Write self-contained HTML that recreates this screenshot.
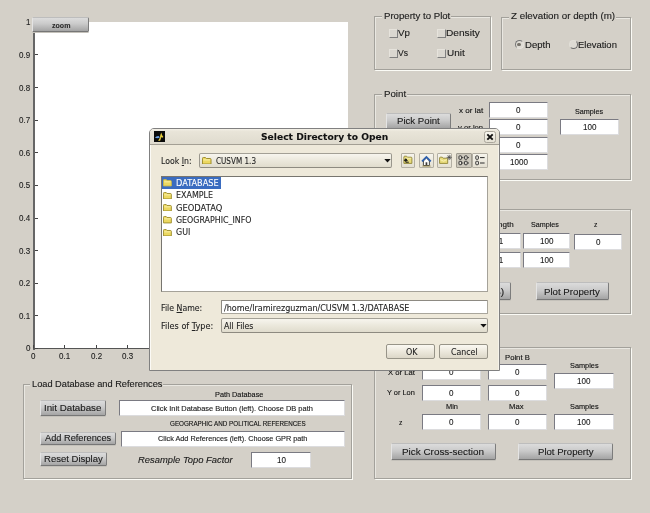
<!DOCTYPE html>
<html lang="en"><head><meta charset="utf-8"><title>CUSVM GUI - Select Directory to Open</title>
<style>
html,body{margin:0;padding:0;}
body{width:650px;height:513px;overflow:hidden;background:#d4d0c8;position:relative;font-family:"Liberation Sans", sans-serif;}
#root{position:absolute;left:0;top:0;width:650px;height:513px;will-change:transform;}
.abs{position:absolute;}
.t{position:absolute;white-space:nowrap;transform-origin:0 0;}
.ls{font-family:"Liberation Sans", sans-serif;-webkit-text-stroke:0.12px currentColor;}
.dv{font-family:"DejaVu Sans", "Liberation Sans", sans-serif;-webkit-text-stroke:0.1px currentColor;}
.fld{background:#fff;border:1px solid;border-color:#7a7a82 #dcdcde #dcdcde #7a7a82;box-sizing:border-box;}
.fld2{background:#fff;border:1px solid;border-color:#8d8a82 #a9a69c #a9a69c #8d8a82;box-sizing:border-box;border-radius:1px;}
.btn{box-sizing:border-box;background:linear-gradient(#dcdcdc,#cacaca 45%,#a4a4a4);border:1px solid;border-color:#bdbdbd #7c7c7c #767676 #e4e4e4;border-radius:1.5px;box-shadow:0 1px 0 #c4c1ba;}
.chk{box-sizing:border-box;background:#dad7d0;border:1px solid;border-color:#e6e3dc #7f7f7f #7f7f7f #e6e3dc;}
.radio{box-sizing:border-box;border-radius:50%;border:1px solid;background:#dedbd4;}
.radio.on{border-color:#777 #e8e5de #e8e5de #777;transform:rotate(0deg);}
.radio.off{border-color:#e2dfd8 #6a6a6a #6a6a6a #e2dfd8;}
.radio .dot{position:absolute;left:1.6px;top:1.6px;width:3.8px;height:3.8px;border-radius:50%;background:#77736b;}
.dlg{box-sizing:border-box;background:#eee9da;border:1px solid #808080;border-radius:5px 5px 0 0;box-shadow:inset 1px 0 0 #fbfaf5,inset -1px 0 0 #f6f3ea;}
.dlgtitle{background:linear-gradient(#f4f1e8 0,#e9e5d9 14%,#dfdbce);border-radius:4px 4px 0 0;}
.closeb{box-sizing:border-box;border:1px solid #aaa69b;border-radius:2.5px;background:linear-gradient(#f7f5ee,#e6e2d5);}
.combo{box-sizing:border-box;border:1px solid;border-color:#a3a096 #9a978d #8d8a80 #9a978d;border-radius:2px;background:linear-gradient(#f7f5ee,#ebe8dc 50%,#e0dccd);}
.tbtn{box-sizing:border-box;border:1px solid #b3afa3;border-radius:1px;background:linear-gradient(#f6f4ec,#e4e0d2);}
.tbtn.pressed{background:#cdc9bd;border-color:#a09c90;}
.flist{box-sizing:border-box;background:#fff;border:1px solid;border-color:#77756f #a5a299 #a5a299 #77756f;}
.dbtn{box-sizing:border-box;border:1px solid #979488;border-radius:2px;background:linear-gradient(#faf8f2,#ece8dc 50%,#dcd7c8);}
</style></head>
<body>
<div id="root">
<div class="abs" style="left:34px;top:22px;width:313.5px;height:327px;background:#fff;"></div>
<div class="abs" style="left:33px;top:22px;width:2px;height:327.5px;background:#666;"></div>
<div class="abs" style="left:33px;top:347.6px;width:314.5px;height:1.6px;background:#555;"></div>
<div class="abs" style="left:35px;top:22px;width:2.5px;height:1px;background:#444;"></div>
<span class="t ls" id="t0" style="font-size:9px;line-height:9px;color:#222;left:25.96px;top:18.49px;transform:scaleX(0.8850);">1</span>
<div class="abs" style="left:35px;top:54px;width:2.5px;height:1px;background:#444;"></div>
<span class="t ls" id="t1" style="font-size:9px;line-height:9px;color:#222;left:19.32px;top:51.09px;transform:scaleX(0.8850);">0.9</span>
<div class="abs" style="left:35px;top:87px;width:2.5px;height:1px;background:#444;"></div>
<span class="t ls" id="t2" style="font-size:9px;line-height:9px;color:#222;left:19.32px;top:83.69px;transform:scaleX(0.8850);">0.8</span>
<div class="abs" style="left:35px;top:120px;width:2.5px;height:1px;background:#444;"></div>
<span class="t ls" id="t3" style="font-size:9px;line-height:9px;color:#222;left:19.32px;top:116.29px;transform:scaleX(0.8850);">0.7</span>
<div class="abs" style="left:35px;top:152px;width:2.5px;height:1px;background:#444;"></div>
<span class="t ls" id="t4" style="font-size:9px;line-height:9px;color:#222;left:19.32px;top:148.89px;transform:scaleX(0.8850);">0.6</span>
<div class="abs" style="left:35px;top:185px;width:2.5px;height:1px;background:#444;"></div>
<span class="t ls" id="t5" style="font-size:9px;line-height:9px;color:#222;left:19.32px;top:181.49px;transform:scaleX(0.8850);">0.5</span>
<div class="abs" style="left:35px;top:218px;width:2.5px;height:1px;background:#444;"></div>
<span class="t ls" id="t6" style="font-size:9px;line-height:9px;color:#222;left:19.32px;top:214.09px;transform:scaleX(0.8850);">0.4</span>
<div class="abs" style="left:35px;top:250px;width:2.5px;height:1px;background:#444;"></div>
<span class="t ls" id="t7" style="font-size:9px;line-height:9px;color:#222;left:19.32px;top:246.69px;transform:scaleX(0.8850);">0.3</span>
<div class="abs" style="left:35px;top:283px;width:2.5px;height:1px;background:#444;"></div>
<span class="t ls" id="t8" style="font-size:9px;line-height:9px;color:#222;left:19.32px;top:279.29px;transform:scaleX(0.8850);">0.2</span>
<div class="abs" style="left:35px;top:315px;width:2.5px;height:1px;background:#444;"></div>
<span class="t ls" id="t9" style="font-size:9px;line-height:9px;color:#222;left:19.32px;top:311.89px;transform:scaleX(0.8850);">0.1</span>
<div class="abs" style="left:35px;top:348px;width:2.5px;height:1px;background:#444;"></div>
<span class="t ls" id="t10" style="font-size:9px;line-height:9px;color:#222;left:25.96px;top:344.49px;transform:scaleX(0.8850);">0</span>
<div class="abs" style="left:33px;top:345px;width:1px;height:3px;background:#444;"></div>
<span class="t ls" id="t11" style="font-size:9px;line-height:9px;color:#222;left:31.28px;top:352.49px;transform:scaleX(0.8850);">0</span>
<div class="abs" style="left:64px;top:345px;width:1px;height:3px;background:#444;"></div>
<span class="t ls" id="t12" style="font-size:9px;line-height:9px;color:#222;left:59.23px;top:352.49px;transform:scaleX(0.8850);">0.1</span>
<div class="abs" style="left:96px;top:345px;width:1px;height:3px;background:#444;"></div>
<span class="t ls" id="t13" style="font-size:9px;line-height:9px;color:#222;left:90.50px;top:352.49px;transform:scaleX(0.8850);">0.2</span>
<div class="abs" style="left:127px;top:345px;width:1px;height:3px;background:#444;"></div>
<span class="t ls" id="t14" style="font-size:9px;line-height:9px;color:#222;left:121.77px;top:352.49px;transform:scaleX(0.8850);">0.3</span>
<div class="abs" style="left:158px;top:345px;width:1px;height:3px;background:#444;"></div>
<span class="t ls" id="t15" style="font-size:9px;line-height:9px;color:#222;left:153.04px;top:352.49px;transform:scaleX(0.8850);">0.4</span>
<div class="abs" style="left:189px;top:345px;width:1px;height:3px;background:#444;"></div>
<span class="t ls" id="t16" style="font-size:9px;line-height:9px;color:#222;left:184.31px;top:352.49px;transform:scaleX(0.8850);">0.5</span>
<div class="abs" style="left:221px;top:345px;width:1px;height:3px;background:#444;"></div>
<span class="t ls" id="t17" style="font-size:9px;line-height:9px;color:#222;left:215.58px;top:352.49px;transform:scaleX(0.8850);">0.6</span>
<div class="abs" style="left:252px;top:345px;width:1px;height:3px;background:#444;"></div>
<span class="t ls" id="t18" style="font-size:9px;line-height:9px;color:#222;left:246.85px;top:352.49px;transform:scaleX(0.8850);">0.7</span>
<div class="abs" style="left:283px;top:345px;width:1px;height:3px;background:#444;"></div>
<span class="t ls" id="t19" style="font-size:9px;line-height:9px;color:#222;left:278.12px;top:352.49px;transform:scaleX(0.8850);">0.8</span>
<div class="abs" style="left:314px;top:345px;width:1px;height:3px;background:#444;"></div>
<span class="t ls" id="t20" style="font-size:9px;line-height:9px;color:#222;left:309.39px;top:352.49px;transform:scaleX(0.8850);">0.9</span>
<div class="abs" style="left:346px;top:345px;width:1px;height:3px;background:#444;"></div>
<span class="t ls" id="t21" style="font-size:9px;line-height:9px;color:#222;left:343.98px;top:352.49px;transform:scaleX(0.8850);">1</span>
<div class="abs btn" style="left:32px;top:17px;width:57px;height:15px;"></div>
<span class="t ls" id="t22" style="font-size:7.5px;line-height:7.5px;color:#2a2a2a;font-weight:bold;left:51.50px;top:21.96px;transform:scaleX(0.9391);">zoom</span>
<div class="abs" style="left:375px;top:17px;width:117px;height:54px;border:1px solid;border-color:#e9e7e1 #fbfbf6 #fbfbf6 #e9e7e1;box-sizing:border-box;"></div>
<div class="abs" style="left:374px;top:16px;width:117px;height:54px;border:1px solid #a3a19b;box-sizing:border-box;"></div>
<div class="abs" style="left:382.2px;top:14px;width:69.0px;height:5px;background:#d4d0c8;"></div>
<span class="t ls" id="t23" style="font-size:9.4px;line-height:9.4px;color:#1a1a1a;left:383.80px;top:11.25px;transform:scaleX(1.0259);">Property to Plot</span>
<div class="abs chk" style="left:388.5px;top:29px;width:9px;height:9px;"></div>
<div class="abs chk" style="left:437.2px;top:29px;width:9px;height:9px;"></div>
<div class="abs chk" style="left:388.5px;top:49px;width:9px;height:9px;"></div>
<div class="abs chk" style="left:437.2px;top:49px;width:9px;height:9px;"></div>
<span class="t ls" id="t24" style="font-size:9.4px;line-height:9.4px;color:#1a1a1a;left:398.40px;top:28.25px;transform:scaleX(1.0376);">Vp</span>
<span class="t ls" id="t25" style="font-size:9.4px;line-height:9.4px;color:#1a1a1a;left:446.40px;top:28.25px;transform:scaleX(1.0811);">Density</span>
<span class="t ls" id="t26" style="font-size:9.4px;line-height:9.4px;color:#1a1a1a;left:398.40px;top:47.95px;transform:scaleX(0.9130);">Vs</span>
<span class="t ls" id="t27" style="font-size:9.4px;line-height:9.4px;color:#1a1a1a;left:446.80px;top:47.95px;transform:scaleX(1.0617);">Unit</span>
<div class="abs" style="left:502px;top:18px;width:130px;height:53px;border:1px solid;border-color:#e9e7e1 #fbfbf6 #fbfbf6 #e9e7e1;box-sizing:border-box;"></div>
<div class="abs" style="left:501px;top:17px;width:130px;height:53px;border:1px solid #a3a19b;box-sizing:border-box;"></div>
<div class="abs" style="left:509px;top:15px;width:106.79999999999995px;height:5px;background:#d4d0c8;"></div>
<span class="t ls" id="t28" style="font-size:9.4px;line-height:9.4px;color:#1a1a1a;left:510.60px;top:11.45px;transform:scaleX(1.0459);">Z elevation or depth (m)</span>
<div class="abs radio on" style="left:514.5px;top:40px;width:9px;height:9px;"><div class="dot"></div></div>
<span class="t ls" id="t29" style="font-size:9.4px;line-height:9.4px;color:#1a1a1a;left:525.30px;top:40.35px;transform:scaleX(1.0187);">Depth</span>
<div class="abs radio off" style="left:568.5px;top:40px;width:9px;height:9px;"></div>
<span class="t ls" id="t30" style="font-size:9.4px;line-height:9.4px;color:#1a1a1a;left:578.10px;top:40.05px;transform:scaleX(1.0083);">Elevation</span>
<div class="abs" style="left:375px;top:95px;width:257px;height:86px;border:1px solid;border-color:#e9e7e1 #fbfbf6 #fbfbf6 #e9e7e1;box-sizing:border-box;"></div>
<div class="abs" style="left:374px;top:94px;width:257px;height:86px;border:1px solid #a3a19b;box-sizing:border-box;"></div>
<div class="abs" style="left:382px;top:92px;width:24.80000000000001px;height:5px;background:#d4d0c8;"></div>
<span class="t ls" id="t31" style="font-size:9.4px;line-height:9.4px;color:#1a1a1a;left:383.60px;top:89.05px;transform:scaleX(1.0339);">Point</span>
<div class="abs btn" style="left:386px;top:112.5px;width:65px;height:16px;"></div>
<span class="t ls" id="t32" style="font-size:9.4px;line-height:9.4px;color:#1a1a1a;left:397.30px;top:115.75px;transform:scaleX(1.0267);">Pick Point</span>
<span class="t ls" id="t33" style="font-size:7.5px;line-height:7.5px;color:#111;left:458.80px;top:106.86px;transform:scaleX(1.0748);">x or lat</span>
<span class="t ls" id="t34" style="font-size:7.5px;line-height:7.5px;color:#111;left:458.30px;top:124.25px;transform:scaleX(1.0199);">y or lon</span>
<span class="t ls" id="t35" style="font-size:7.5px;line-height:7.5px;color:#111;left:468.31px;top:141.66px;transform:scaleX(0.9000);">z</span>
<div class="abs fld" style="left:489px;top:102px;width:59px;height:16px;"></div>
<span class="t ls" id="t36" style="font-size:9.4px;line-height:9.4px;color:#1a1a1a;left:516.26px;top:104.85px;transform:scaleX(0.8600);">0</span>
<div class="abs fld" style="left:489px;top:119px;width:59px;height:16px;"></div>
<span class="t ls" id="t37" style="font-size:9.4px;line-height:9.4px;color:#1a1a1a;left:516.26px;top:121.85px;transform:scaleX(0.8600);">0</span>
<div class="abs fld" style="left:489px;top:137px;width:59px;height:16px;"></div>
<span class="t ls" id="t38" style="font-size:9.4px;line-height:9.4px;color:#1a1a1a;left:516.26px;top:139.85px;transform:scaleX(0.8600);">0</span>
<div class="abs fld" style="left:489px;top:154px;width:59px;height:16px;"></div>
<span class="t ls" id="t39" style="font-size:9.4px;line-height:9.4px;color:#1a1a1a;left:509.53px;top:156.85px;transform:scaleX(0.8600);">1000</span>
<span class="t ls" id="t40" style="font-size:7.5px;line-height:7.5px;color:#111;left:575.30px;top:107.56px;transform:scaleX(0.9627);">Samples</span>
<div class="abs fld" style="left:560px;top:119px;width:59px;height:16px;"></div>
<span class="t ls" id="t41" style="font-size:9.4px;line-height:9.4px;color:#1a1a1a;left:582.77px;top:121.85px;transform:scaleX(0.8600);">100</span>
<div class="abs" style="left:375px;top:210px;width:257px;height:105px;border:1px solid;border-color:#e9e7e1 #fbfbf6 #fbfbf6 #e9e7e1;box-sizing:border-box;"></div>
<div class="abs" style="left:374px;top:209px;width:257px;height:105px;border:1px solid #a3a19b;box-sizing:border-box;"></div>
<span class="t ls" id="t42" style="font-size:7.5px;line-height:7.5px;color:#111;left:489.10px;top:220.85px;transform:scaleX(1.0761);">Length</span>
<span class="t ls" id="t43" style="font-size:7.5px;line-height:7.5px;color:#111;left:531.00px;top:220.85px;transform:scaleX(0.9559);">Samples</span>
<span class="t ls" id="t44" style="font-size:7.5px;line-height:7.5px;color:#111;left:594.11px;top:220.85px;transform:scaleX(0.9000);">z</span>
<div class="abs fld" style="left:474px;top:233px;width:47px;height:16px;"></div>
<span class="t ls" id="t45" style="font-size:9.4px;line-height:9.4px;color:#1a1a1a;left:491.89px;top:235.85px;transform:scaleX(0.8600);">0.1</span>
<div class="abs fld" style="left:523px;top:233px;width:47px;height:16px;"></div>
<span class="t ls" id="t46" style="font-size:9.4px;line-height:9.4px;color:#1a1a1a;left:539.77px;top:235.85px;transform:scaleX(0.8600);">100</span>
<div class="abs fld" style="left:574px;top:234px;width:48px;height:16px;"></div>
<span class="t ls" id="t47" style="font-size:9.4px;line-height:9.4px;color:#1a1a1a;left:595.76px;top:236.85px;transform:scaleX(0.8600);">0</span>
<div class="abs fld" style="left:474px;top:252px;width:47px;height:16px;"></div>
<span class="t ls" id="t48" style="font-size:9.4px;line-height:9.4px;color:#1a1a1a;left:491.89px;top:254.85px;transform:scaleX(0.8600);">0.1</span>
<div class="abs fld" style="left:523px;top:252px;width:47px;height:16px;"></div>
<span class="t ls" id="t49" style="font-size:9.4px;line-height:9.4px;color:#1a1a1a;left:539.77px;top:254.85px;transform:scaleX(0.8600);">100</span>
<div class="abs btn" style="left:404px;top:282.3px;width:107px;height:18.2px;"></div>
<span class="t ls" id="t50" style="font-size:9.4px;line-height:9.4px;color:#1a1a1a;left:435.60px;top:286.65px;transform:scaleX(1.0891);">Pick Line (A-B)</span>
<div class="abs btn" style="left:536px;top:282.3px;width:73px;height:18.2px;"></div>
<span class="t ls" id="t51" style="font-size:9.4px;line-height:9.4px;color:#1a1a1a;left:544.00px;top:286.65px;transform:scaleX(1.0313);">Plot Property</span>
<div class="abs" style="left:375px;top:348px;width:257px;height:132px;border:1px solid;border-color:#e9e7e1 #fbfbf6 #fbfbf6 #e9e7e1;box-sizing:border-box;"></div>
<div class="abs" style="left:374px;top:347px;width:257px;height:132px;border:1px solid #a3a19b;box-sizing:border-box;"></div>
<span class="t ls" id="t52" style="font-size:7.5px;line-height:7.5px;color:#111;left:438.60px;top:353.65px;transform:scaleX(1.0428);">Point A</span>
<span class="t ls" id="t53" style="font-size:7.5px;line-height:7.5px;color:#111;left:504.60px;top:353.65px;transform:scaleX(1.0253);">Point B</span>
<span class="t ls" id="t54" style="font-size:7.5px;line-height:7.5px;color:#111;left:387.60px;top:369.25px;transform:scaleX(1.0203);">X or Lat</span>
<span class="t ls" id="t55" style="font-size:7.5px;line-height:7.5px;color:#111;left:386.60px;top:388.75px;transform:scaleX(0.9852);">Y or Lon</span>
<span class="t ls" id="t56" style="font-size:7.5px;line-height:7.5px;color:#111;left:398.61px;top:418.85px;transform:scaleX(0.9000);">z</span>
<span class="t ls" id="t57" style="font-size:7.5px;line-height:7.5px;color:#111;left:446.40px;top:403.15px;transform:scaleX(0.9922);">Min</span>
<span class="t ls" id="t58" style="font-size:7.5px;line-height:7.5px;color:#111;left:508.90px;top:403.15px;transform:scaleX(1.0232);">Max</span>
<span class="t ls" id="t59" style="font-size:7.5px;line-height:7.5px;color:#111;left:570.30px;top:362.45px;transform:scaleX(0.9799);">Samples</span>
<span class="t ls" id="t60" style="font-size:7.5px;line-height:7.5px;color:#111;left:570.30px;top:403.35px;transform:scaleX(0.9799);">Samples</span>
<div class="abs fld" style="left:422px;top:364px;width:59px;height:16px;"></div>
<span class="t ls" id="t61" style="font-size:9.4px;line-height:9.4px;color:#1a1a1a;left:449.26px;top:366.85px;transform:scaleX(0.8600);">0</span>
<div class="abs fld" style="left:488px;top:364px;width:59px;height:16px;"></div>
<span class="t ls" id="t62" style="font-size:9.4px;line-height:9.4px;color:#1a1a1a;left:515.26px;top:366.85px;transform:scaleX(0.8600);">0</span>
<div class="abs fld" style="left:422px;top:385px;width:59px;height:16px;"></div>
<span class="t ls" id="t63" style="font-size:9.4px;line-height:9.4px;color:#1a1a1a;left:449.26px;top:387.85px;transform:scaleX(0.8600);">0</span>
<div class="abs fld" style="left:488px;top:385px;width:59px;height:16px;"></div>
<span class="t ls" id="t64" style="font-size:9.4px;line-height:9.4px;color:#1a1a1a;left:515.26px;top:387.85px;transform:scaleX(0.8600);">0</span>
<div class="abs fld" style="left:422px;top:414px;width:59px;height:16px;"></div>
<span class="t ls" id="t65" style="font-size:9.4px;line-height:9.4px;color:#1a1a1a;left:449.26px;top:416.85px;transform:scaleX(0.8600);">0</span>
<div class="abs fld" style="left:488px;top:414px;width:59px;height:16px;"></div>
<span class="t ls" id="t66" style="font-size:9.4px;line-height:9.4px;color:#1a1a1a;left:515.26px;top:416.85px;transform:scaleX(0.8600);">0</span>
<div class="abs fld" style="left:554px;top:373px;width:60px;height:16px;"></div>
<span class="t ls" id="t67" style="font-size:9.4px;line-height:9.4px;color:#1a1a1a;left:577.27px;top:375.85px;transform:scaleX(0.8600);">100</span>
<div class="abs fld" style="left:554px;top:414px;width:60px;height:16px;"></div>
<span class="t ls" id="t68" style="font-size:9.4px;line-height:9.4px;color:#1a1a1a;left:577.27px;top:416.85px;transform:scaleX(0.8600);">100</span>
<div class="abs btn" style="left:391px;top:443px;width:105px;height:17px;"></div>
<span class="t ls" id="t69" style="font-size:9.4px;line-height:9.4px;color:#1a1a1a;left:402.20px;top:446.55px;transform:scaleX(1.0564);">Pick Cross-section</span>
<div class="abs btn" style="left:518px;top:443px;width:95px;height:17px;"></div>
<span class="t ls" id="t70" style="font-size:9.4px;line-height:9.4px;color:#1a1a1a;left:538.10px;top:446.65px;transform:scaleX(1.0239);">Plot Property</span>
<div class="abs" style="left:24px;top:385px;width:329px;height:95px;border:1px solid;border-color:#e9e7e1 #fbfbf6 #fbfbf6 #e9e7e1;box-sizing:border-box;"></div>
<div class="abs" style="left:23px;top:384px;width:329px;height:95px;border:1px solid #a3a19b;box-sizing:border-box;"></div>
<div class="abs" style="left:30.200000000000003px;top:382px;width:133.10000000000002px;height:5px;background:#d4d0c8;"></div>
<span class="t ls" id="t71" style="font-size:9.4px;line-height:9.4px;color:#1a1a1a;left:31.80px;top:378.75px;transform:scaleX(0.9850);">Load Database and References</span>
<div class="abs btn" style="left:40px;top:400px;width:66px;height:16px;"></div>
<span class="t ls" id="t72" style="font-size:9.4px;line-height:9.4px;color:#1a1a1a;left:44.20px;top:402.95px;transform:scaleX(1.0389);">Init Database</span>
<div class="abs btn" style="left:40px;top:432px;width:76px;height:13px;"></div>
<span class="t ls" id="t73" style="font-size:9.4px;line-height:9.4px;color:#1a1a1a;left:44.90px;top:433.15px;transform:scaleX(0.9846);">Add References</span>
<div class="abs btn" style="left:40px;top:452px;width:67px;height:14px;"></div>
<span class="t ls" id="t74" style="font-size:9.4px;line-height:9.4px;color:#1a1a1a;left:44.20px;top:454.35px;transform:scaleX(1.0165);">Reset Display</span>
<span class="t ls" id="t75" style="font-size:7.5px;line-height:7.5px;color:#111;left:214.50px;top:390.55px;transform:scaleX(0.9753);">Path Database</span>
<div class="abs fld" style="left:119px;top:400px;width:226px;height:15.5px;"></div>
<span class="t ls" id="t76" style="font-size:7.5px;line-height:7.5px;color:#1a1a1a;left:150.90px;top:404.65px;transform:scaleX(0.9957);">Click Init Database Button (left). Choose DB path</span>
<span class="t ls" id="t77" style="font-size:7.5px;line-height:7.5px;color:#111;left:170.20px;top:419.95px;transform:scaleX(0.8385);">GEOGRAPHIC AND POLITICAL REFERENCES</span>
<div class="abs fld" style="left:121px;top:431px;width:224px;height:16px;"></div>
<span class="t ls" id="t78" style="font-size:7.5px;line-height:7.5px;color:#1a1a1a;left:157.80px;top:435.35px;transform:scaleX(0.9712);">Click Add References (left). Choose GPR path</span>
<span class="t ls" id="t79" style="font-size:9.4px;line-height:9.4px;color:#1a1a1a;font-style:italic;left:137.80px;top:455.25px;transform:scaleX(1.0021);">Resample Topo Factor</span>
<div class="abs fld" style="left:251px;top:452px;width:60px;height:15.5px;"></div>
<span class="t ls" id="t80" style="font-size:9.4px;line-height:9.4px;color:#1a1a1a;left:276.51px;top:454.60px;transform:scaleX(0.8600);">10</span>
<div class="abs dlg" style="left:149px;top:128px;width:351px;height:243px;"></div>
<div class="abs dlgtitle" style="left:150px;top:129px;width:349px;height:15px;"></div>
<div class="abs" style="left:150px;top:144px;width:349px;height:1px;background:#a39f94;"></div>
<svg class="abs" style="left:154px;top:131px" width="11" height="11" viewBox="0 0 11 11">
<rect width="11" height="11" fill="#0a0a0a"/>
<path d="M0.9 6.5 Q2.4 4.9 4.6 5 L5.6 6.6 Q3.2 8 0.9 6.5 Z" fill="#6fa4e6"/>
<path d="M7.2 1.5 L8.2 4.3 L9.4 6 L8.3 6.8 L7.5 6 L6.1 9.7 H4.1 L5.6 7.3 L6.3 4.2 Z" fill="#e8cf3c"/>
<path d="M5.2 6.2 L6.2 5.2 L6 7.4 Z" fill="#3d5f9e"/>
</svg>
<span class="t dv" id="t81" style="font-size:9.5px;line-height:9.5px;color:#111;font-weight:bold;left:261.10px;top:132.06px;transform:scaleX(0.9638);">Select Directory to Open</span>
<div class="abs closeb" style="left:484px;top:131px;width:12px;height:12px;"></div>
<svg class="abs" style="left:484px;top:131px" width="12" height="12" viewBox="0 0 12 12">
<path d="M3.3 3.3 L8.7 8.7 M8.7 3.3 L3.3 8.7" stroke="#111" stroke-width="1.9" stroke-linecap="butt" fill="none"/></svg>
<span class="t dv" id="t82" style="font-size:8.5px;line-height:8.5px;color:#222;left:161.10px;top:156.61px;transform:scaleX(0.9160);">Look <u>I</u>n:</span>
<div class="abs combo" style="left:199px;top:153px;width:193px;height:15px;"></div>
<svg class="abs" style="left:202px;top:156.8px" width="9.5" height="7.5" viewBox="0 0 10 8" preserveAspectRatio="none">
<path d="M0.5 7.5 V1.5 Q0.5 0.5 1.5 0.5 H3.6 L4.6 1.6 H8.4 Q9.5 1.6 9.5 2.6 V7.5 Z" fill="#ecd860" stroke="#9a8a2a" stroke-width="1"/>
<path d="M1.4 3.1 H8.6" stroke="#fbf3b0" stroke-width="1"/></svg>
<span class="t dv" id="t83" style="font-size:8.5px;line-height:8.5px;color:#222;left:216.20px;top:156.81px;transform:scaleX(0.8525);">CUSVM 1.3</span>
<svg class="abs" style="left:384px;top:159px" width="7" height="4" viewBox="0 0 7 4"><path d="M0.3 0 H6.7 L3.5 3.6 Z" fill="#111"/></svg>
<div class="abs tbtn" style="left:400.5px;top:153px;width:14.7px;height:15px;"></div>
<div class="abs tbtn" style="left:419px;top:153px;width:14.5px;height:15px;"></div>
<div class="abs tbtn" style="left:437px;top:153px;width:15px;height:15px;"></div>
<div class="abs tbtn pressed" style="left:456px;top:153px;width:16px;height:15px;"></div>
<div class="abs tbtn" style="left:472px;top:153px;width:16px;height:15px;"></div>
<svg class="abs" style="left:402px;top:155px" width="12" height="10" viewBox="0 0 12 10">
<path d="M1.9 8.4 V2 Q1.9 1.2 2.7 1.2 H4.6 L5.5 2.2 H9 Q9.9 2.2 9.9 3 V8.4 Z" fill="#e9dc7c" stroke="#8f8535" stroke-width="0.9"/>
<path d="M2.6 3.3 H9.2" stroke="#f8f2b8" stroke-width="0.8"/>
<path d="M3.8 7.3 V4.4 M2.3 5.6 L3.8 3.7 L5.3 5.6 Z M3.8 7.2 H6.8" stroke="#1c1c1c" stroke-width="1" fill="#1c1c1c"/></svg>
<svg class="abs" style="left:420px;top:154.5px" width="13" height="12" viewBox="0 0 13 12">
<path d="M3.4 5.9 L6.4 3 L9.4 5.9 V10.5 H3.4 Z" fill="#fcfcfa" stroke="#333" stroke-width="0.9"/>
<path d="M2 6.3 L6.4 1.9 L10.8 6.3" stroke="#2d5fae" stroke-width="1.7" fill="none"/>
<rect x="5.6" y="7.3" width="1.7" height="3.2" fill="#3a3a3a"/>
<path d="M2.4 11.1 H10.6" stroke="#9a8a4a" stroke-width="0.9"/></svg>
<svg class="abs" style="left:438px;top:154px" width="14" height="12" viewBox="0 0 14 12">
<path d="M1.6 9.4 V4 Q1.6 3.2 2.4 3.2 H4.2 L5.1 4.2 H8.9 Q9.7 4.2 9.7 5 V9.4 Z" fill="#e9dc7c" stroke="#8f8535" stroke-width="0.9"/>
<path d="M2.2 5.6 L5.6 7.2 L9.2 5.4" stroke="#f8f2b8" stroke-width="0.9" fill="none"/>
<path d="M11.2 0.8 V6 M8.7 3.4 H13.7 M9.4 1.6 L13 5.2 M13 1.6 L9.4 5.2" stroke="#444" stroke-width="0.75"/></svg>
<svg class="abs" style="left:458px;top:155px" width="12" height="11" viewBox="0 0 12 11">
<g fill="#e9e6dc" stroke="#2c2c2c" stroke-width="0.95"><rect x="1" y="0.9" width="2.6" height="3.4" rx="0.6"/><rect x="6.6" y="0.9" width="2.6" height="3.4" rx="0.6"/><rect x="1" y="6.3" width="2.6" height="3.4" rx="0.6"/><rect x="6.6" y="6.3" width="2.6" height="3.4" rx="0.6"/></g>
<path d="M4.1 2.6 H5.4 M9.7 2.6 H11 M4.1 8 H5.4 M9.7 8 H11" stroke="#2c2c2c" stroke-width="0.9"/></svg>
<svg class="abs" style="left:475px;top:155px" width="11" height="11" viewBox="0 0 11 11">
<g fill="#f4f2ea" stroke="#2c2c2c" stroke-width="0.95"><rect x="0.8" y="0.9" width="2.6" height="3.4" rx="0.6"/><rect x="0.8" y="6.3" width="2.6" height="3.4" rx="0.6"/></g>
<path d="M5 2.6 H9.6 M5 8 H9.6" stroke="#2c2c2c" stroke-width="1"/></svg>
<div class="abs flist" style="left:161px;top:176px;width:327px;height:116px;"></div>
<div class="abs" style="left:162px;top:177px;width:59px;height:12px;background:#3a6cc0;"></div>
<svg class="abs" style="left:163px;top:179.2px" width="8.8" height="7.4" viewBox="0 0 10 8" preserveAspectRatio="none">
<path d="M0.5 7.5 V1.5 Q0.5 0.5 1.5 0.5 H3.6 L4.6 1.6 H8.4 Q9.5 1.6 9.5 2.6 V7.5 Z" fill="#ecd860" stroke="#c9b84a" stroke-width="1"/>
<path d="M1.4 3.1 H8.6" stroke="#fbf3b0" stroke-width="1"/></svg>
<span class="t dv" id="t84" style="font-size:9px;line-height:9px;color:#fff;left:176.10px;top:178.79px;transform:scaleX(0.9100);">DATABASE</span>
<svg class="abs" style="left:163px;top:191.6px" width="8.8" height="7.4" viewBox="0 0 10 8" preserveAspectRatio="none">
<path d="M0.5 7.5 V1.5 Q0.5 0.5 1.5 0.5 H3.6 L4.6 1.6 H8.4 Q9.5 1.6 9.5 2.6 V7.5 Z" fill="#ecd860" stroke="#9a8a2a" stroke-width="1"/>
<path d="M1.4 3.1 H8.6" stroke="#fbf3b0" stroke-width="1"/></svg>
<span class="t dv" id="t85" style="font-size:9px;line-height:9px;color:#222;left:176.10px;top:191.19px;transform:scaleX(0.8829);">EXAMPLE</span>
<svg class="abs" style="left:163px;top:204.0px" width="8.8" height="7.4" viewBox="0 0 10 8" preserveAspectRatio="none">
<path d="M0.5 7.5 V1.5 Q0.5 0.5 1.5 0.5 H3.6 L4.6 1.6 H8.4 Q9.5 1.6 9.5 2.6 V7.5 Z" fill="#ecd860" stroke="#9a8a2a" stroke-width="1"/>
<path d="M1.4 3.1 H8.6" stroke="#fbf3b0" stroke-width="1"/></svg>
<span class="t dv" id="t86" style="font-size:9px;line-height:9px;color:#222;left:176.10px;top:203.59px;transform:scaleX(0.9286);">GEODATAQ</span>
<svg class="abs" style="left:163px;top:216.4px" width="8.8" height="7.4" viewBox="0 0 10 8" preserveAspectRatio="none">
<path d="M0.5 7.5 V1.5 Q0.5 0.5 1.5 0.5 H3.6 L4.6 1.6 H8.4 Q9.5 1.6 9.5 2.6 V7.5 Z" fill="#ecd860" stroke="#9a8a2a" stroke-width="1"/>
<path d="M1.4 3.1 H8.6" stroke="#fbf3b0" stroke-width="1"/></svg>
<span class="t dv" id="t87" style="font-size:9px;line-height:9px;color:#222;left:176.10px;top:215.99px;transform:scaleX(0.8774);">GEOGRAPHIC_INFO</span>
<svg class="abs" style="left:163px;top:228.8px" width="8.8" height="7.4" viewBox="0 0 10 8" preserveAspectRatio="none">
<path d="M0.5 7.5 V1.5 Q0.5 0.5 1.5 0.5 H3.6 L4.6 1.6 H8.4 Q9.5 1.6 9.5 2.6 V7.5 Z" fill="#ecd860" stroke="#9a8a2a" stroke-width="1"/>
<path d="M1.4 3.1 H8.6" stroke="#fbf3b0" stroke-width="1"/></svg>
<span class="t dv" id="t88" style="font-size:9px;line-height:9px;color:#222;left:176.10px;top:228.39px;transform:scaleX(0.8817);">GUI</span>
<span class="t dv" id="t89" style="font-size:8.5px;line-height:8.5px;color:#222;left:161.20px;top:303.91px;transform:scaleX(0.9178);">File <u>N</u>ame:</span>
<div class="abs fld2" style="left:221px;top:300px;width:267px;height:14px;"></div>
<span class="t dv" id="t90" style="font-size:8.5px;line-height:8.5px;color:#222;left:224.00px;top:303.81px;transform:scaleX(0.9478);">/home/lramirezguzman/CUSVM 1.3/DATABASE</span>
<span class="t dv" id="t91" style="font-size:8.5px;line-height:8.5px;color:#222;left:161.20px;top:321.91px;transform:scaleX(0.9551);">Files of <u>T</u>ype:</span>
<div class="abs combo" style="left:221px;top:318px;width:267px;height:15px;"></div>
<span class="t dv" id="t92" style="font-size:8.5px;line-height:8.5px;color:#222;left:224.00px;top:321.91px;transform:scaleX(0.9214);">All Files</span>
<svg class="abs" style="left:480px;top:324px" width="7" height="4" viewBox="0 0 7 4"><path d="M0.3 0 H6.7 L3.5 3.6 Z" fill="#111"/></svg>
<div class="abs dbtn" style="left:386px;top:344px;width:49px;height:15px;"></div>
<span class="t dv" id="t93" style="font-size:8.5px;line-height:8.5px;color:#222;left:406.20px;top:347.91px;transform:scaleX(0.9376);">OK</span>
<div class="abs dbtn" style="left:439px;top:344px;width:49px;height:15px;"></div>
<span class="t dv" id="t94" style="font-size:8.5px;line-height:8.5px;color:#222;left:450.80px;top:347.91px;transform:scaleX(0.9237);">Cancel</span>
</div>
</body></html>
